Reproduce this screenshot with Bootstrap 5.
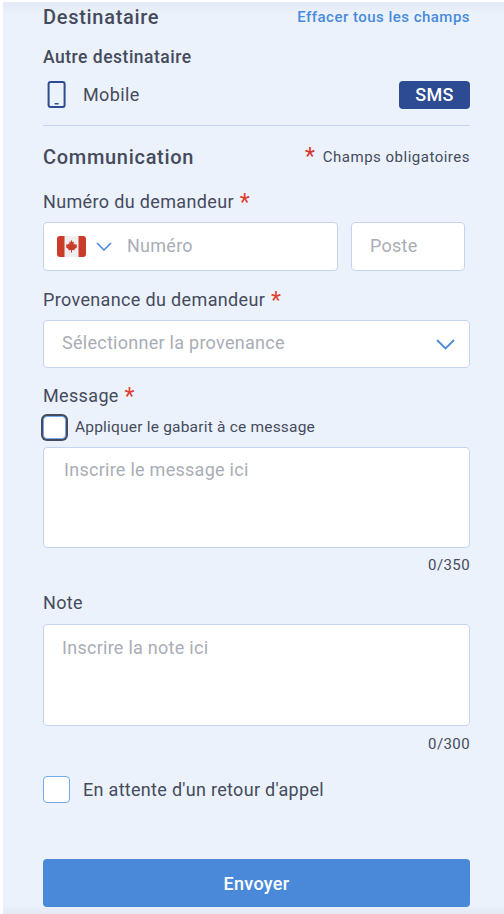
<!DOCTYPE html>
<html lang="fr">
<head>
<meta charset="utf-8">
<title>Communication</title>
<link href="https://cdn.jsdelivr.net/npm/bootstrap@5.3.0/dist/css/bootstrap.min.css" rel="stylesheet">
<style>
html,body{height:914px;overflow:hidden;background:#fff}
body{font-family:Roboto,"Liberation Sans",sans-serif;color:#454b5c;font-size:16px}
.panel{height:914px;margin-left:3px;padding:0 34px 0 40px;background:#ebf2fb;position:relative}
.panel::before{content:"";position:absolute;left:0;right:0;top:0;height:14px;background:linear-gradient(#fff 0,#fff 2px,#e3e9f6 2px,#ebf2fb 100%)}
.panel::after{content:"";position:absolute;left:0;right:0;bottom:0;height:9px;background:linear-gradient(#ebf2fb,#e3e9f6)}
.head-row{height:34px;position:relative;z-index:1}
.title-txt{font-size:20px;font-weight:500;line-height:34px;letter-spacing:.7px}
.clear-link{font-size:15px;font-weight:500;color:#4a8bdc;text-decoration:none;letter-spacing:.48px}
.sub-title{font-size:17.5px;font-weight:500;line-height:24px;margin-top:11px;letter-spacing:.5px}
.mobile-row{height:28px;margin-top:12px}
.mobile-txt{margin-left:16px;font-size:18px;letter-spacing:.4px;padding-bottom:2px}
.sms-tag{width:71px;height:28px;background:#2c4b92;color:#fff;border-radius:4px;font-size:18px;font-weight:500;line-height:28px;text-align:center;letter-spacing:.3px}
.sep{height:1px;background:#c5d5ef;margin-top:16px}
.comm-row{margin-top:14px;height:34px}
.req-note{font-size:15px;letter-spacing:.5px}
.req-star{color:#d9352a;font-size:23px;line-height:14px;margin-right:8px;vertical-align:-2px;letter-spacing:0}
.lab{font-size:18px;line-height:24px;display:block;margin:0;letter-spacing:.35px}
.lab b{color:#e2402f;font-weight:400;font-size:23px;line-height:20px;vertical-align:-2px;margin-left:1px}
.field{height:49px;background:#fff;border:1px solid #c5d5ef;border-radius:4px;font-size:18px;color:#a9adb5;padding:0;letter-spacing:.27px}
.form-control.field{font-size:18px;color:#454b5c;box-shadow:none;letter-spacing:.27px}
.form-control.field::placeholder{color:#a9adb5;opacity:1}
.phone-box{width:295px}
.phone-box .form-control{border:0;background:transparent;padding:0 0 2px;font-size:18px;letter-spacing:.27px;box-shadow:none}
.phone-box .form-control::placeholder{color:#a9adb5;opacity:1}
.post{width:114px;padding:0 0 2px 18px}
.prov{padding:0 14px 0 18px;height:48px}
.prov-txt{padding-bottom:3px}
.area{height:102px;resize:none}
.counter{font-size:15px;line-height:17px;text-align:right;letter-spacing:.4px}
.chk-focus{width:23px;height:23px;flex:none;background:#fff;border:1px solid #76a9ea;border-radius:4px;box-shadow:0 0 0 2px #454b5c}
.chk-plain{width:27px;height:27px;flex:none;background:#fff;border:1px solid #76a9ea;border-radius:4px}
.send{display:block;width:100%;height:48px;background:#4a89da;border:0;border-radius:4px;color:#fff;font-size:18px;font-weight:500;letter-spacing:.3px;position:relative;z-index:1}
.chk-label{font-size:15.5px;margin-left:9px;letter-spacing:.2px}
.wait-label{font-size:18px;margin-left:13px;letter-spacing:.3px}
.msg-area{margin-top:8px;padding:8px 20px;height:101px}
.note-area{margin-top:9px;padding:9px 18px}
</style>
</head>
<body>
<div class="panel">
  <div class="head-row d-flex justify-content-between align-items-center">
    <span class="title-txt">Destinataire</span>
    <a class="clear-link" href="#">Effacer tous les champs</a>
  </div>
  <div class="sub-title">Autre destinataire</div>
  <div class="mobile-row d-flex align-items-center">
    <svg width="20" height="28" viewBox="0 0 20 28" class="ms-1" aria-hidden="true"><rect x="1.6" y="1" width="16" height="25" rx="2" fill="none" stroke="#2c4b92" stroke-width="2"/><rect x="7.6" y="22" width="4" height="1.5" fill="#2c4b92"/></svg>
    <span class="mobile-txt flex-grow-1">Mobile</span>
    <span class="sms-tag">SMS</span>
  </div>
  <div class="sep"></div>
  <div class="comm-row d-flex justify-content-between align-items-center">
    <span class="title-txt">Communication</span>
    <span class="req-note"><span class="req-star">*</span>Champs obligatoires</span>
  </div>
  <label class="lab" style="margin-top:16px">Numéro du demandeur <b>*</b></label>
  <div class="d-flex justify-content-between" style="margin-top:8px;padding-right:5px">
    <div class="field phone-box d-flex align-items-center">
      <svg width="29" height="21" viewBox="0 0 29 21" style="margin-left:13px;flex:none" aria-hidden="true"><rect width="29" height="21" rx="3" fill="#c93c2b"/><rect x="7.5" width="14" height="21" fill="#eeeeee"/><path d="M14.5 4l1.2 2.2 1.2-.6-.5 3 1.6-1 .4 1.2 1.7-.3-.6 1.900.8.5-2.900 2.300.3 1.100-2.700-.4v2.600h-1v-2.600l-2.700.4.3-1.100-2.900-2.300.8-.5-.6-1.900 1.700.3.4-1.200 1.600 1-.5-3 1.200.6z" fill="#c93c2b"/></svg>
      <svg width="16" height="9" viewBox="0 0 16 9" style="margin:0 15px 0 10px;flex:none" aria-hidden="true"><path d="M1 1l7 7 7-7" fill="none" stroke="#4a8bdc" stroke-width="1.6"/></svg>
      <input class="form-control" type="text" placeholder="Numéro">
    </div>
    <input class="form-control field post" type="text" placeholder="Poste">
  </div>
  <label class="lab" style="margin-top:17px">Provenance du demandeur <b>*</b></label>
  <div class="field prov d-flex align-items-center justify-content-between" style="margin-top:8px">
    <span class="prov-txt">Sélectionner la provenance</span>
    <svg width="19" height="11" viewBox="0 0 19 11" aria-hidden="true"><path d="M1 1l8.500 8.500L18 1" fill="none" stroke="#4a8bdc" stroke-width="1.800"/></svg>
  </div>
  <label class="lab" style="margin-top:16px">Message <b>*</b></label>
  <div class="d-flex align-items-center" style="margin-top:8px;height:23px">
    <span class="chk-focus"></span>
    <span class="chk-label">Appliquer le gabarit à ce message</span>
  </div>
  <textarea class="form-control field area msg-area" placeholder="Inscrire le message ici"></textarea>
  <div class="counter" style="margin-top:9px">0/350</div>
  <label class="lab" style="margin-top:17px">Note</label>
  <textarea class="form-control field area note-area" placeholder="Inscrire la note ici"></textarea>
  <div class="counter" style="margin-top:10px">0/300</div>
  <div class="d-flex align-items-center" style="margin-top:23px">
    <span class="chk-plain"></span>
    <span class="wait-label">En attente d'un retour d'appel</span>
  </div>
  <button class="send" type="button" style="margin-top:56px">Envoyer</button>
</div>
<script src="https://cdn.jsdelivr.net/npm/bootstrap@5.3.0/dist/js/bootstrap.bundle.min.js"></script>
</body>
</html>
